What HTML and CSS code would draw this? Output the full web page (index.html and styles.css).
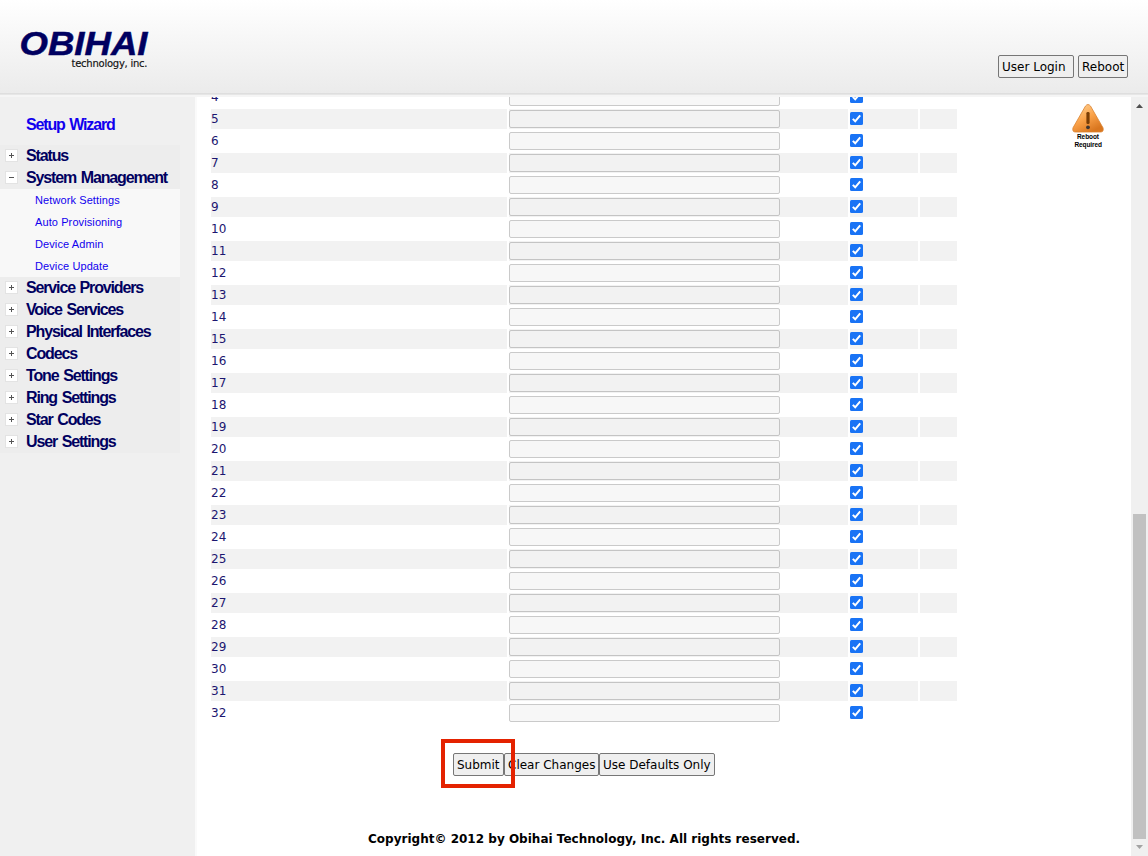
FILE: index.html
```
<!DOCTYPE html>
<html lang="en">
<head>
<meta charset="utf-8">
<title>Obihai Technology, Inc.</title>
<link rel="stylesheet" href="styles.css">
</head>
<body>
<header class="header">
  <svg class="logo" width="140" height="50" viewBox="0 0 140 50">
    <text class="logo-name" x="3.500" y="32.500" textLength="128" lengthAdjust="spacingAndGlyphs">OBIHAI</text>
    <text class="logo-sub" x="55.500" y="45" textLength="76">technology, inc.</text>
  </svg>
  <div class="header-actions">
    <button class="btn btn-login"><span>User Login</span></button>
    <button class="btn btn-reboot"><span>Reboot</span></button>
  </div>
</header>
<div class="body">
  <nav class="sidebar">
    <a class="wizard">Setup Wizard</a>
    <div class="menu">
      <div class="item"><i class="toggle"></i><span>Status</span></div>
      <div class="item"><i class="toggle open"></i><span>System Management</span></div>
      <div class="submenu">
        <a>Network Settings</a>
        <a>Auto Provisioning</a>
        <a>Device Admin</a>
        <a>Device Update</a>
      </div>
      <div class="item"><i class="toggle"></i><span>Service Providers</span></div>
      <div class="item"><i class="toggle"></i><span>Voice Services</span></div>
      <div class="item"><i class="toggle"></i><span>Physical Interfaces</span></div>
      <div class="item"><i class="toggle"></i><span>Codecs</span></div>
      <div class="item"><i class="toggle"></i><span>Tone Settings</span></div>
      <div class="item"><i class="toggle"></i><span>Ring Settings</span></div>
      <div class="item"><i class="toggle"></i><span>Star Codes</span></div>
      <div class="item"><i class="toggle"></i><span>User Settings</span></div>
    </div>
  </nav>
  <main class="content">
    <div class="rows" id="rows"></div>
    <div class="form-actions">
      <button class="btn btn-submit"><span>Submit</span></button><button class="btn btn-clear"><span>Clear Changes</span></button><button class="btn btn-defaults"><span>Use Defaults Only</span></button>
      <div class="highlight"></div>
    </div>
    <div class="copyright"><span>Copyright© 2012 by Obihai Technology, Inc. All rights reserved.</span></div>
  </main>
  <aside class="notice">
    <svg width="36" height="46" viewBox="0 0 36 46">
      <defs>
        <linearGradient id="warn" x1="0" y1="0" x2=".6" y2="1">
          <stop offset="0" stop-color="#ffd9a0"/>
          <stop offset=".55" stop-color="#fba34a"/>
          <stop offset="1" stop-color="#d9761f"/>
        </linearGradient>
      </defs>
      <path d="M15.400 2.200Q18 -1.200 20.600 2.200L33 23.800Q34 28 30.600 28H5.400Q2 28 3 23.800Z" fill="url(#warn)" stroke="#d9812f" stroke-width=".8"/>
      <rect x="16.400" y="8" width="3.200" height="12" rx="1.300" fill="#7a3d05"/>
      <circle cx="18" cy="23.300" r="1.900" fill="#3d3533"/>
      <text class="notice-text" x="7" y="34.500" textLength="22">Reboot</text>
      <text class="notice-text" x="4.500" y="42.500" textLength="27.500">Required</text>
    </svg>
  </aside>
  <div class="scrollbar">
    <svg class="arrow" width="17" height="17" viewBox="0 0 17 17"><path d="M5 11L8.500 7L12 11Z" fill="#505050"/></svg>
    <div class="thumb"></div>
    <svg class="arrow" width="17" height="17" viewBox="0 0 17 17"><path d="M5 6L8.500 10L12 6Z" fill="#a3a3a3"/></svg>
  </div>
</div>
<script src="rows.js"></script>
</body>
</html>
```

FILE: styles.css
```
* { box-sizing: border-box; }
body {
  margin: 0;
  height: 856px;
  overflow: hidden;
  display: flex;
  flex-direction: column;
  background: #fff;
  font-family: "DejaVu Sans", Verdana, sans-serif;
  font-size: 12px;
}
.header {
  flex: none;
  height: 97px;
  display: flex;
  justify-content: space-between;
  align-items: flex-start;
  padding: 0 20px 0 16px;
  background:
    linear-gradient(#dedede, #dedede) 0 93px / 100% 1px no-repeat,
    linear-gradient(#e6e6e6, #e6e6e6) 0 94px / 100% 1px no-repeat,
    linear-gradient(#f5f5f5, #f5f5f5) 0 95px / 100% 2px no-repeat,
    linear-gradient(#fff, #ebebeb 93px);
}
.logo { margin-top: 22px; }
.logo-name {
  font: italic bold 33.500px "Liberation Sans", Arial, sans-serif;
  fill: #000060;
  stroke: #000060;
  stroke-width: .5;
}
.logo-sub { font: 10px "DejaVu Sans", sans-serif; fill: #111; stroke: #111; stroke-width: .15; }
.header-actions { display: flex; gap: 4px; margin-top: 55px; }
.btn {
  height: 23px;
  margin: 0;
  padding: 1px 0 0 3px;
  border: 1px solid #767676;
  border-radius: 2px;
  background: #efefef;
  color: #000;
  font: 12px "DejaVu Sans", Verdana, sans-serif;
  text-align: left;
  white-space: nowrap;
}
.btn-login { width: 76px; }
.btn-reboot { width: 50px; }
.body { flex: 1; min-height: 0; display: flex; }
.sidebar {
  flex: none;
  width: 197px;
  padding-top: 16px;
  background: #f0f0f0;
  border-right: 2px solid #fafafa;
  font-family: "Liberation Sans", Arial, sans-serif;
}
.wizard {
  display: block;
  height: 32px;
  padding-left: 26px;
  line-height: 23px;
  font-size: 16px;
  font-weight: bold;
  letter-spacing: -1.150px;
  word-spacing: 1.200px;
  color: #10e;
}
.menu { width: 180px; background: #ededed; }
.item {
  height: 22px;
  display: flex;
  align-items: center;
  padding-left: 5px;
  color: #000060;
  font-size: 16px;
  font-weight: bold;
  letter-spacing: -1.150px;
  word-spacing: 1.400px;
  white-space: nowrap;
}
.toggle {
  width: 13px;
  height: 13px;
  margin: 0 8px 2px 0;
  border: 1px solid #e3e3e3;
  background:
    linear-gradient(#555, #555) 3px 5px / 5px 1px no-repeat,
    linear-gradient(#555, #555) 5px 3px / 1px 5px no-repeat,
    #fff;
}
.toggle.open {
  background: linear-gradient(#555, #555) 3px 5px / 5px 1px no-repeat, #fff;
}
.submenu { background: #f8f8f8; }
.submenu a {
  display: block;
  height: 22px;
  padding-left: 35px;
  line-height: 22px;
  font-size: 11px;
  letter-spacing: .100px;
  color: #10e;
}
.content { flex: none; width: 775px; padding-left: 14px; overflow: hidden; }
.rows { margin-top: -10px; }
.row {
  display: grid;
  grid-template-columns: 296px 339px 68px 37px;
  column-gap: 2px;
  height: 20px;
  margin-bottom: 2px;
  color: #1c1670;
  line-height: 20px;
}
.row.odd > div { background: #f2f2f2; }
.cell { display: flex; align-items: flex-start; }
.field {
  width: 271px;
  height: 18px;
  margin: 1px 0 0;
  border: 1px solid #cacaca;
  border-radius: 2px;
  background: #f7f7f7;
}
.odd .field { background: #f2f2f2; border-color: #c4c4c4; }
.check { margin-top: 3px; }
.form-actions {
  position: relative;
  display: flex;
  height: 23px;
  margin: 30px 0 0 242px;
}
.btn-submit { width: 51px; }
.btn-clear { width: 95px; }
.btn-defaults { width: 116px; }
.highlight {
  position: absolute;
  left: -12px;
  top: -14px;
  width: 74px;
  height: 49px;
  border: 4px solid #e42200;
}
.copyright {
  margin: 54px 0 0 157px;
  line-height: 19px;
  font-weight: bold;
  letter-spacing: .010px;
  white-space: nowrap;
}
.notice { flex: 1; padding: 7px 0 0 98px; }
.notice-text { font: bold 6.500px "Liberation Sans", Arial, sans-serif; fill: #000; }
.scrollbar {
  flex: none;
  width: 17px;
  display: flex;
  flex-direction: column;
  justify-content: space-between;
  align-items: center;
  background: #f0f0f0;
}
.thumb { width: 13px; height: 325px; margin-top: 400px; background: #c1c1c1; }
.arrow { display: block; }
```

FILE: rows.js
```
const rows = document.getElementById("rows");
const check =
  '<svg class="check" width="13" height="13" viewBox="0 0 13 13">' +
  '<rect width="13" height="13" rx="1.5" fill="#1973f5"/>' +
  '<path d="M2.800 6.900L5.200 9.300L10.200 3.300" fill="none" stroke="#fff" stroke-width="2"/></svg>';
for (let n = 4; n <= 32; n++) {
  const row = document.createElement("div");
  row.className = n % 2 ? "row odd" : "row";
  row.innerHTML =
    '<div class="num">' + n + '</div>' +
    '<div class="cell"><input class="field" disabled></div>' +
    '<div class="cell">' + check + '</div><div></div>';
  rows.appendChild(row);
}
```
